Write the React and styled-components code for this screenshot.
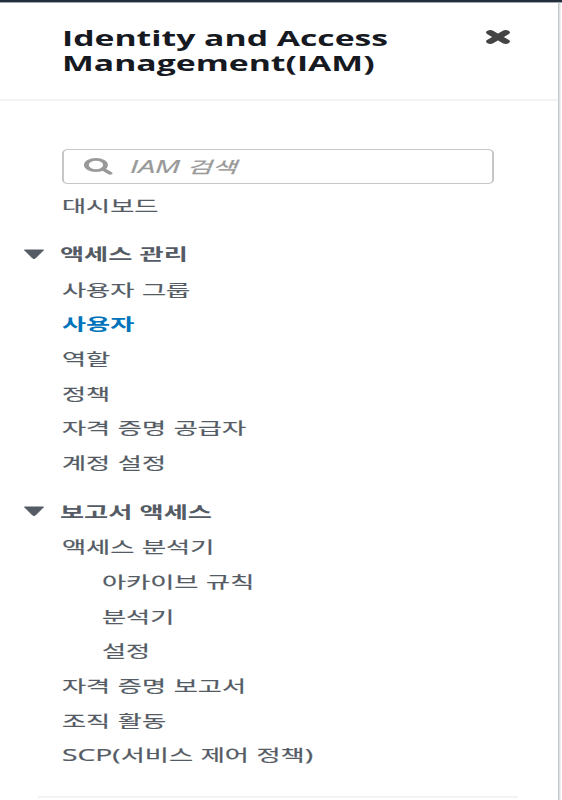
import styled, { createGlobalStyle } from 'styled-components';

const GlobalStyle = createGlobalStyle`
  * {
    box-sizing: border-box;
  }
  body {
    margin: 0;
    background: #fff;
    overflow: hidden;
    font-family: 'Open Sans', 'Noto Sans CJK KR', sans-serif;
  }
`;
const Page = styled.div`
  display: flex;
  height: 800px;
  border-top: 2px solid #232f3e;
  box-shadow: inset 0 1px 0 #a3a8ae;
`;
const Panel = styled.aside`
  width: 559px;
  height: 798px;
  overflow: hidden;
  border-right: 1px solid #bfc8ca;
  box-shadow: 1px 0 2px rgba(0, 28, 36, 0.2);
`;
const Header = styled.header`
  display: flex;
  justify-content: space-between;
  align-items: flex-start;
  height: 99px;
  padding: 24px 48px 0 62px;
  border-bottom: 2px solid #f2f3f3;
`;
/* extended lettering */
const Wide = styled.span`
  display: inline-block;
  white-space: nowrap;
  transform: scaleX(${({ $scale }) => $scale || 1.69});
  transform-origin: 0 50%;
`;
const Latin = styled.span`
  font-size: ${({ $size }) => $size};
  line-height: 1;
`;
const Title = styled.h1`
  display: flex;
  flex-direction: column;
  align-items: flex-start;
  margin: 0;
  color: #16191f;
  font-size: 20.5px;
  font-weight: 700;
  line-height: 25px;
`;
const CloseButton = styled.button`
  display: flex;
  margin: 4px 0 0;
  padding: 0;
  border: 0;
  background: none;
`;
const Body = styled.div`
  padding: 48px 0 0 62px;
`;
const SearchBox = styled.label`
  display: flex;
  align-items: center;
  width: 432px;
  height: 35px;
  margin-bottom: 4.5px;
  padding: 0 0 1px 20px;
  border: 1px solid #c6c6c6;
  border-left-width: 2px;
  border-right-width: 2px;
  border-radius: 6px / 4px;
  color: #999;
  font-size: 16px;
  font-style: italic;
  -webkit-text-stroke: 0.2px;
`;
const SearchIcon = styled.svg`
  flex: none;
  margin: 0 17px 0 0;
`;
const List = styled.ul`
  list-style: none;
  margin: 0;
  padding: 0 0 0 ${({ $nested }) => ($nested ? '40px' : '0')};
`;
const Item = styled.li`
  height: 34.7px;
  color: ${({ $active }) => ($active ? '#0073bb' : '#545b64')};
  font-size: 15.5px;
  font-weight: ${({ $active }) => ($active ? 700 : 400)};
  line-height: 34.7px;
  word-spacing: 0.5px;
  -webkit-text-stroke: ${({ $active }) => ($active ? '0' : '0.2px')};
`;
const Section = styled.section`
  padding-top: 13px;
`;
const SectionTitle = styled.h2`
  display: flex;
  align-items: center;
  height: 36.5px;
  margin: 0 0 0 -39px;
  padding-bottom: 1.5px;
  color: #545b64;
  font-size: 15.5px;
  font-weight: 700;
  word-spacing: 0.3px;
`;
const Caret = styled.svg`
  flex: none;
  margin: 1px 15px 0 0;
`;
const Divider = styled.hr`
  width: 480px;
  height: 2px;
  margin: 22.5px 0 0 -24px;
  border: 0;
  background: #f2f3f3;
`;

const accessLinks = ['사용자 그룹', '사용자', '역할', '정책', '자격 증명 공급자', '계정 설정'];
const analyzerLinks = ['아카이브 규칙', '분석기', '설정'];
const reportLinks = ['자격 증명 보고서', '조직 활동'];

const Links = ({ items, active, nested }) => (
  <List $nested={nested}>
    {items.map((el) => (
      <Item key={el} $active={el === active}>
        <Wide>{el}</Wide>
      </Item>
    ))}
  </List>
);

const SectionHeading = ({ children }) => (
  <SectionTitle>
    <Caret width="22" height="11" viewBox="0 0 22 11">
      <path d="M1.500 1h19l-8 8q-1.500 1-3 0z" fill="#545b64" stroke="#545b64" strokeLinejoin="round" />
    </Caret>
    <Wide>{children}</Wide>
  </SectionTitle>
);

export default function App() {
  return (
    <>
      <GlobalStyle />
      <Page>
        <Panel>
          <Header>
            <Title>
              <Wide $scale={1.645}>Identity and Access</Wide>
              <Wide $scale={1.645}>Management(IAM)</Wide>
            </Title>
            <CloseButton aria-label="close">
              <svg width="24" height="14" viewBox="0 0 14 14" preserveAspectRatio="none">
                <path d="M2.500 2.500l9 9M11.500 2.500l-9 9" stroke="#444" strokeWidth="4.700" strokeLinecap="round" />
              </svg>
            </CloseButton>
          </Header>
          <Body>
            <SearchBox>
              <SearchIcon width="29" height="17" viewBox="0 0 17 17" preserveAspectRatio="none">
                <circle cx="7" cy="7" r="5.600" fill="none" stroke="#999" strokeWidth="2.800" />
                <path d="M11.300 11.300l4 4" stroke="#999" strokeWidth="2.800" strokeLinecap="round" />
              </SearchIcon>
              <Wide>
                <Latin $size="1.11em">IAM</Latin> 검색
              </Wide>
            </SearchBox>
            <Links items={['대시보드']} />
            <Section>
              <SectionHeading>액세스 관리</SectionHeading>
              <Links items={accessLinks} active="사용자" />
            </Section>
            <Section>
              <SectionHeading>보고서 액세스</SectionHeading>
              <Links items={['액세스 분석기']} />
              <Links items={analyzerLinks} nested />
              <Links items={reportLinks} />
              <Item as="div">
                <Wide>
                  <Latin $size="1.08em">SCP(</Latin>서비스 제어 정책<Latin $size="1.08em">)</Latin>
                </Wide>
              </Item>
            </Section>
            <Divider />
          </Body>
        </Panel>
      </Page>
    </>
  );
}
